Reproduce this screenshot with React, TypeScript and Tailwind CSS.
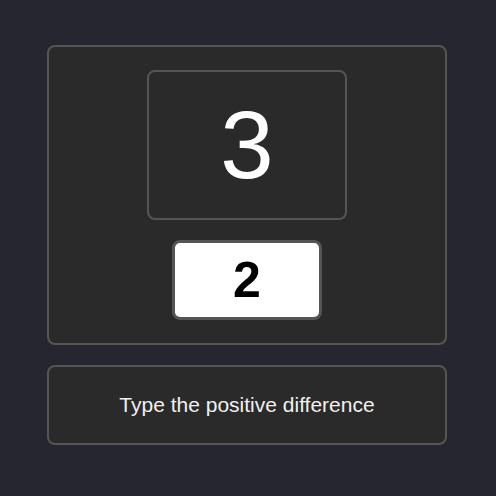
import React from "react";

export default function App() {
  return (
    <div
      className="min-h-[496px] w-full bg-[#262631] pt-[45px]"
      style={{ fontFamily: '"Liberation Sans", Arial, sans-serif' }}
    >
      <div className="ml-[47px] flex w-[400px] flex-col gap-5">
        <div className="flex h-[300px] flex-col items-center justify-center gap-5 rounded-lg border-2 border-[#555555] bg-[#2a2a2a]">
          <div className="flex h-[150px] w-[200px] items-center justify-center rounded-lg border-2 border-[#555555] text-[96px] leading-none text-white">
            3
          </div>
          <input
            readOnly
            value="2"
            className="h-[80px] w-[150px] rounded-lg border-[3px] border-[#555555] bg-white text-center text-[50px] font-bold text-black outline-none"
          />
        </div>
        <div className="flex h-[80px] items-center justify-center rounded-lg border-2 border-[#555555] bg-[#2a2a2a] text-[21px] text-[#f0f0f0]">
          Type the positive difference
        </div>
      </div>
    </div>
  );
}
